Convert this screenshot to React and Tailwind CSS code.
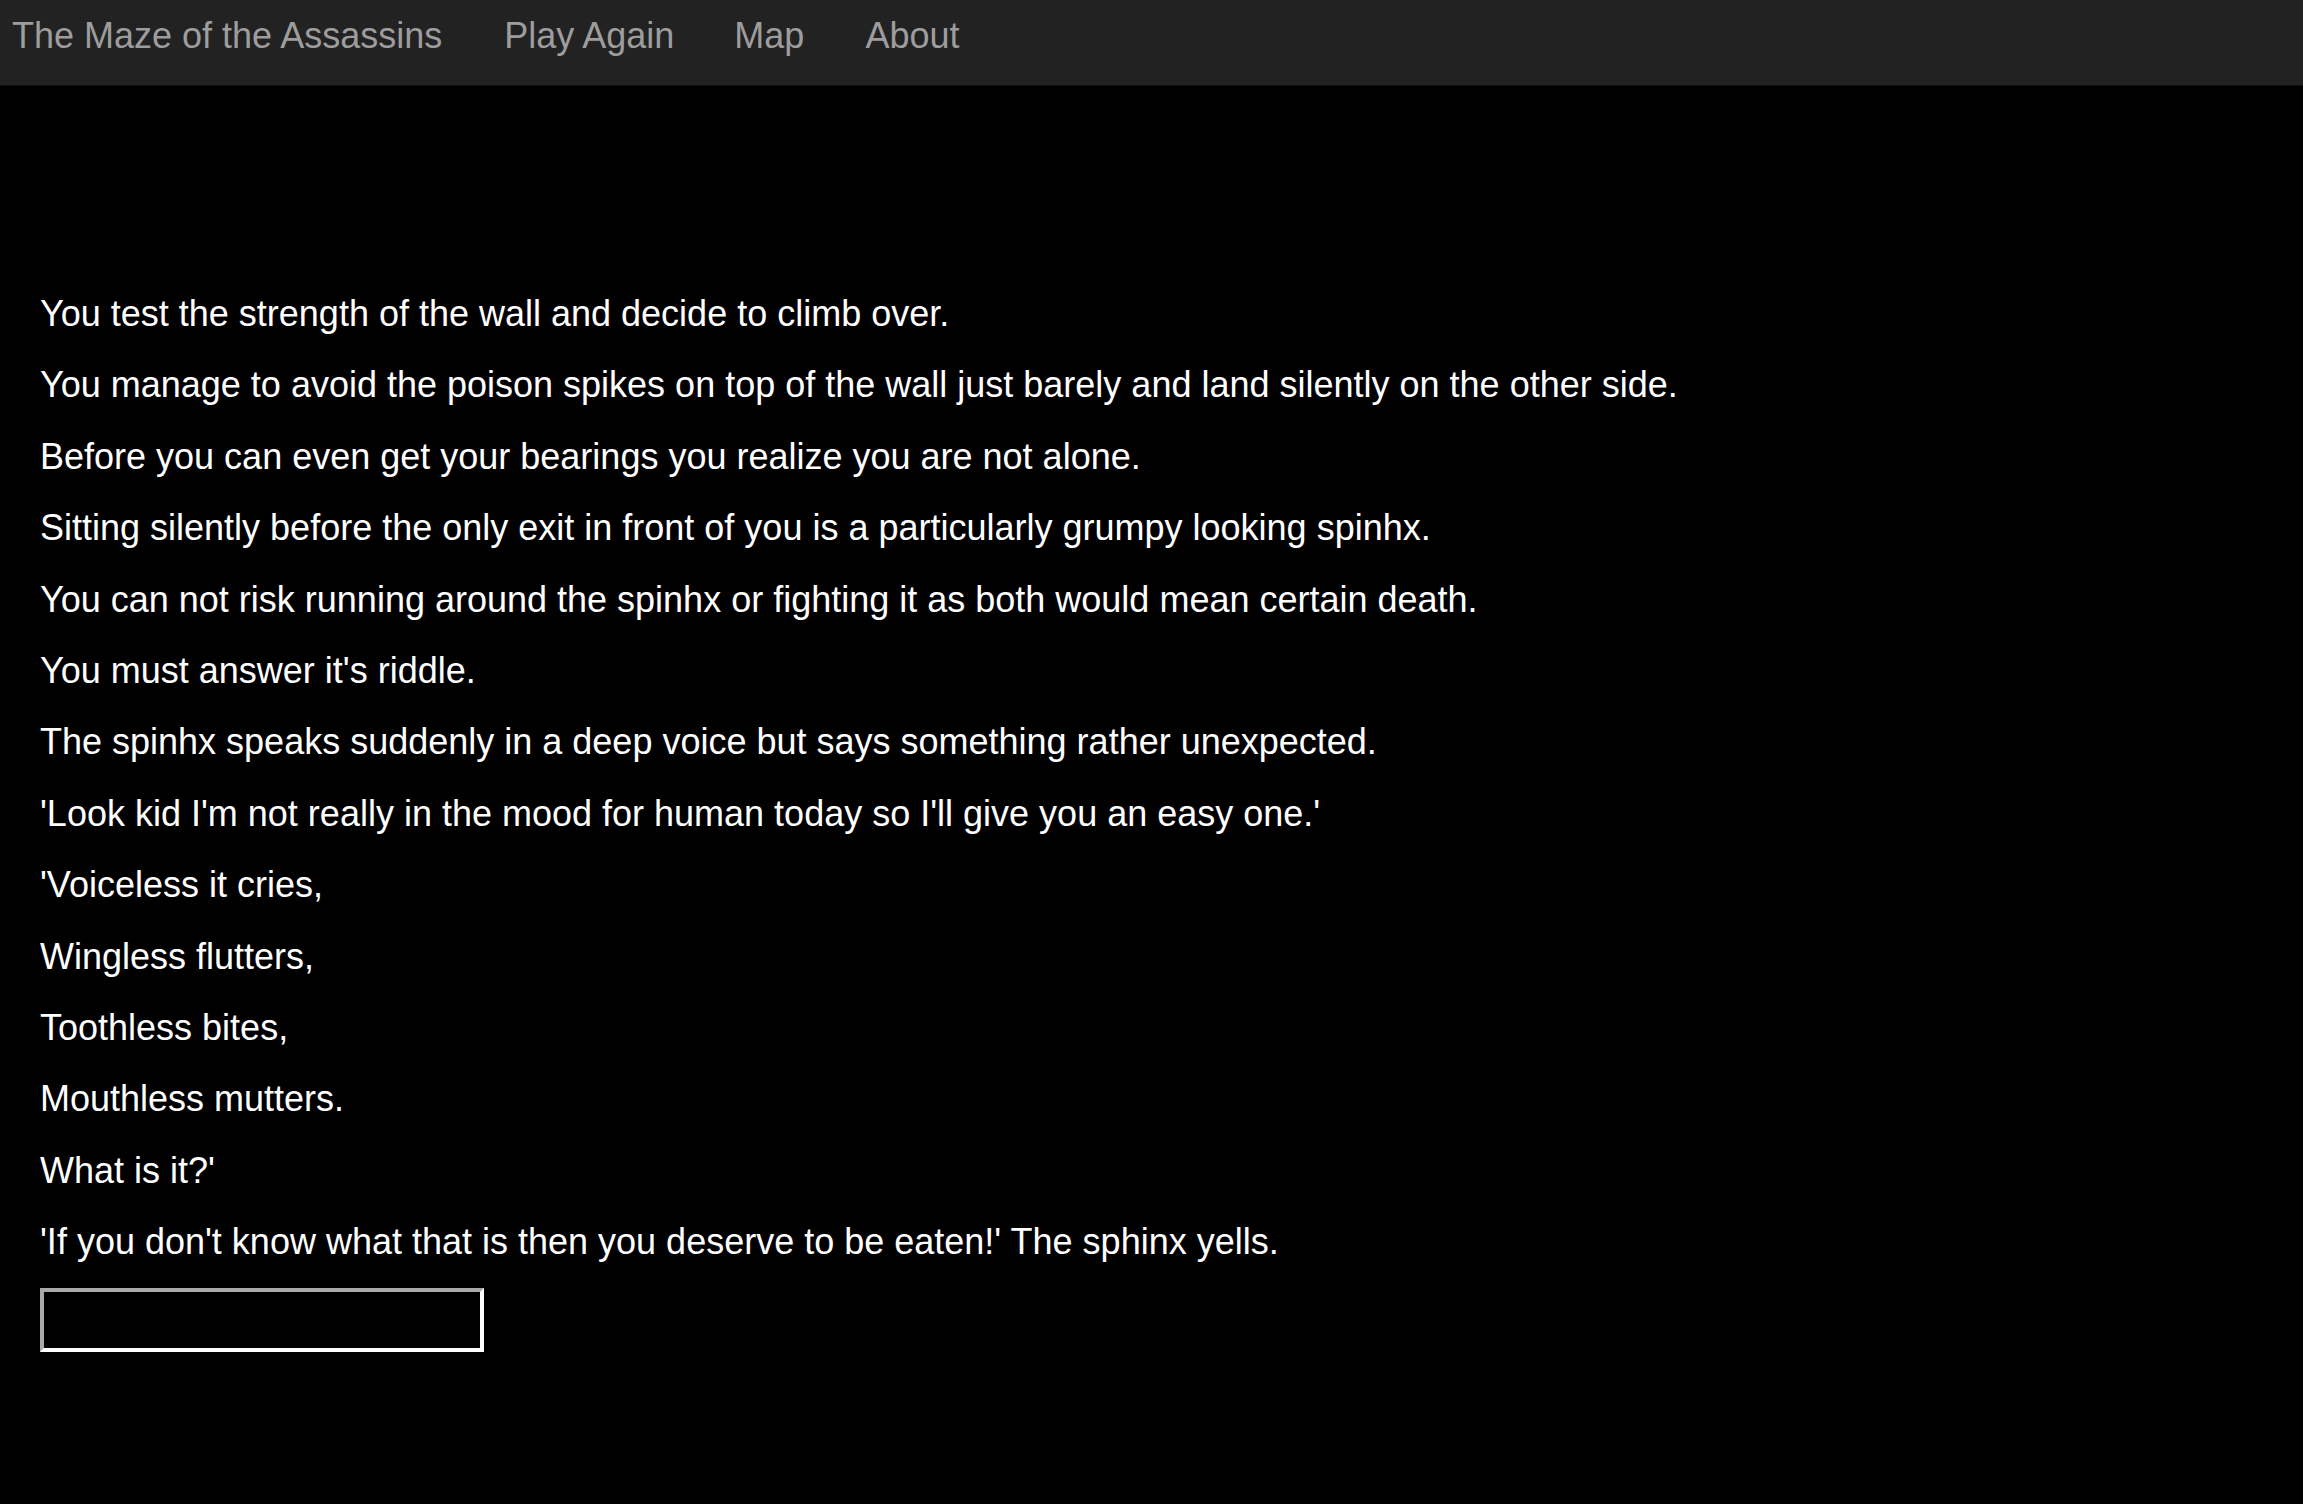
import { useState } from "react";

const lines = [
  "You test the strength of the wall and decide to climb over.",
  "You manage to avoid the poison spikes on top of the wall just barely and land silently on the other side.",
  "Before you can even get your bearings you realize you are not alone.",
  "Sitting silently before the only exit in front of you is a particularly grumpy looking spinhx.",
  "You can not risk running around the spinhx or fighting it as both would mean certain death.",
  "You must answer it's riddle.",
  "The spinhx speaks suddenly in a deep voice but says something rather unexpected.",
  "'Look kid I'm not really in the mood for human today so I'll give you an easy one.'",
  "'Voiceless it cries,",
  "Wingless flutters,",
  "Toothless bites,",
  "Mouthless mutters.",
  "What is it?'",
  "'If you don't know what that is then you deserve to be eaten!' The sphinx yells.",
];

const App = () => {
  const [answer, setAnswer] = useState("");

  return (
    <div className="min-h-[1504px] bg-black font-['Liberation_Sans',Arial,sans-serif]">
      {/* Top navbar */}
      <nav className="h-[86px] bg-[#222222] border-b border-[#0e0e0e] flex items-start pt-[15px] text-[36px] leading-[41px] text-[#9d9d9d]">
        <a href="#" className="pl-[12px]">The Maze of the Assassins</a>
        <a href="#" className="ml-[62px]">Play Again</a>
        <a href="#" className="ml-[60px]">Map</a>
        <a href="#" className="ml-[61px]">About</a>
      </nav>

      {/* Story */}
      <div className="pl-[40px] pt-[202px] text-white text-[36px] leading-[51.4px]">
        {lines.map((line, i) => (
          <p key={i} className="mb-[20px] whitespace-nowrap">
            {line}
          </p>
        ))}
        <input
          type="text"
          value={answer}
          onChange={(e) => setAnswer(e.target.value)}
          className="block w-[444px] h-[64px] bg-black text-white text-[30px] px-2 border-[4px] border-t-[#a9a9a9] border-l-[#a9a9a9] border-b-white border-r-white outline-none"
        />
      </div>
    </div>
  );
};

export default App;
